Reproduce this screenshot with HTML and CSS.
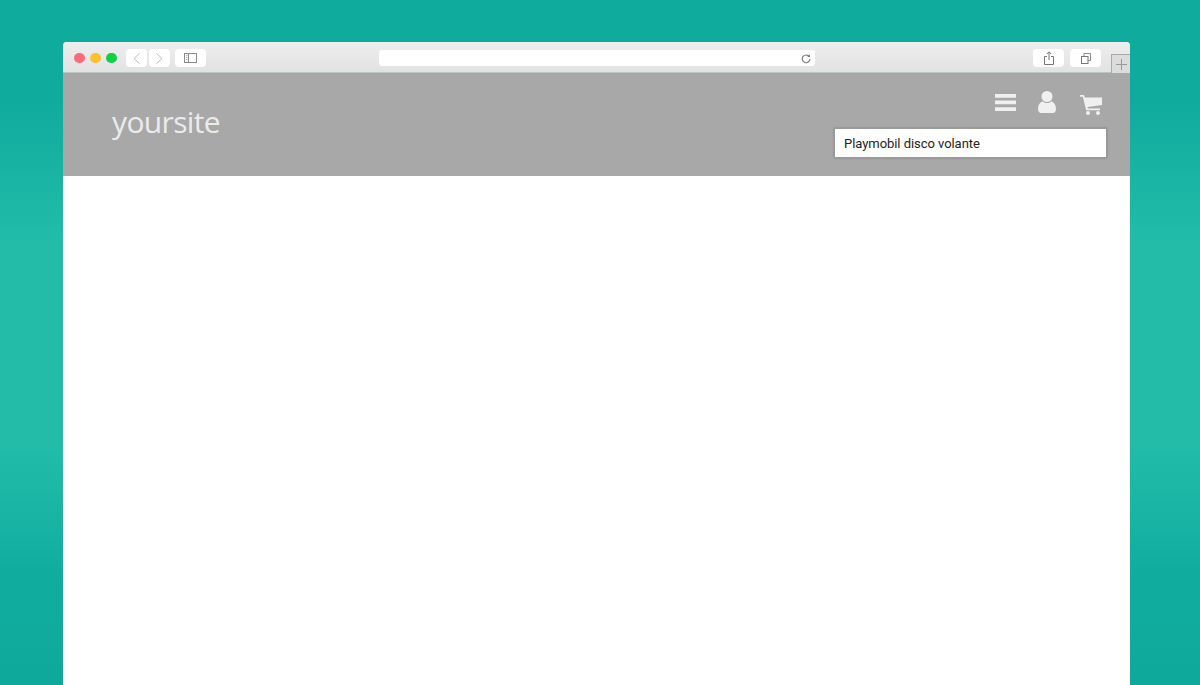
FILE: index.html
```html
<!DOCTYPE html>
<html lang="en">
<head>
<meta charset="utf-8">
<title>yoursite</title>
<link rel="stylesheet" href="styles.css">
</head>
<body>
<div class="window">
  <div class="toolbar">
    <div class="lights">
      <span class="light red"></span>
      <span class="light yellow"></span>
      <span class="light green"></span>
    </div>
    <div class="nav-group">
      <button class="tb nav"><svg width="7" height="11" viewBox="0 0 7 11"><path d="M6.500 .5 1 5.500l5.500 5" fill="none" stroke="#bdbdbd"/></svg></button>
      <button class="tb nav"><svg width="7" height="11" viewBox="0 0 7 11"><path d="M.5 .5 6 5.500l-5.500 5" fill="none" stroke="#bdbdbd"/></svg></button>
    </div>
    <button class="tb side"><svg width="13" height="10" viewBox="0 0 13 10"><rect x=".5" y=".5" width="12" height="9" fill="none" stroke="#8a8a8a"/><path d="M2 2.500h1.500M2 4.500h1.500M2 6.500h1.500" stroke="#b5b5b5"/><path d="M4.500 .5v9" stroke="#8a8a8a"/></svg></button>
    <div class="address">
      <svg width="10" height="11" viewBox="0 0 10 11"><path d="M8.300 3.600A3.900 3.900 0 1 0 9 6" fill="none" stroke="#777" stroke-width="1.100"/><path d="M6.300 3.700 9 4.200 8.700 1.200z" fill="#777"/></svg>
    </div>
    <button class="tb action"><svg width="10" height="14" viewBox="0 0 10 14"><path d="M3 5.500H.5v8h9v-8H7M5 9V1M2.800 3 5 .8 7.200 3" fill="none" stroke="#777"/></svg></button>
    <button class="tb action tabs"><svg width="10" height="11" viewBox="0 0 10 11"><path d="M3 3V.5h6.500v7H7" fill="none" stroke="#8a8a8a"/><rect x=".5" y="3.500" width="6.500" height="7" fill="#fff" stroke="#777"/></svg></button>
    <div class="newtab"><svg width="11" height="11" viewBox="0 0 11 11"><path d="M5.500 0v11M0 5.500h11" stroke="#9a9a9a"/></svg></div>
  </div>
  <header class="site-header">
    <div class="logo">yoursite</div>
    <div class="tools">
      <div class="icons">
        <svg class="icon-menu" width="21" height="18" viewBox="0 0 21 18"><path d="M0 0h21v3.700H0zM0 6.500h21v3.700H0zM0 13.300h21V17H0z" fill="#f0f0f0"/></svg>
        <svg class="icon-user" width="18" height="22" viewBox="0 0 18 22"><circle cx="9" cy="5.500" r="5.500" fill="#f0f0f0"/><path d="M0 18C0 13 3 10.500 5 10.500 6 11.500 7.500 12 9 12s3-.5 4-1.500c2 0 5 2.500 5 7.500 0 2.500-1.500 4-3 4H3c-1.500 0-3-1.500-3-4z" fill="#f0f0f0"/></svg>
        <svg class="icon-cart" width="22" height="20" viewBox="0 0 22 20"><path d="M0 0h4l.8 2.500H22v7.500L7.500 12l.4 1.500H20v1.800H6.200L2.800 1.800H0z" fill="#f0f0f0"/><circle cx="8" cy="18" r="2" fill="#f0f0f0"/><circle cx="18" cy="18" r="2" fill="#f0f0f0"/></svg>
      </div>
      <div class="search">Playmobil disco volante</div>
    </div>
  </header>
  <main class="content"></main>
</div>
</body>
</html>
```
FILE: styles.css
```css
* { box-sizing: border-box; }
html, body { height: 100%; }
body {
  margin: 0;
  overflow: hidden;
  padding: 42px 70px 0 63px;
  background: linear-gradient(180deg, #0fab9d 0%, #0fab9d 15%, #22bca9 35%, #22bca9 65%, #10ad9f 84%, #0fa99b 100%);
}
.window {
  height: 100%;
  display: flex;
  flex-direction: column;
  border-radius: 4px 4px 0 0;
  overflow: hidden;
  background: #fff;
}
.toolbar {
  height: 31px;
  flex: none;
  display: flex;
  align-items: flex-start;
  padding: 7px 0 0 11px;
  background: linear-gradient(180deg, #eeeeee 0%, #e2e2e2 100%);
  border-bottom: 1px solid #b9c6c4;
}
.lights { display: flex; gap: 5.5px; margin-top: 3.5px; }
.light { width: 10.5px; height: 10.5px; border-radius: 50%; }
.red { background: #fe6a78; }
.yellow { background: #fdc12d; }
.green { background: #0ed145; }
.tb {
  height: 18px;
  border: 0;
  padding: 0;
  border-radius: 4px;
  background: #fff;
  display: flex;
  align-items: center;
  justify-content: center;
}
.nav-group { display: flex; gap: 2px; margin-left: 9.5px; }
.nav { width: 21px; }
.side { width: 31px; margin-left: 5px; }
.address {
  width: 436px;
  height: 16px;
  margin: 1px 0 0 173px;
  padding-right: 4px;
  border-radius: 3px;
  background: #fff;
  display: flex;
  align-items: center;
  justify-content: flex-end;
}
.action { width: 31px; margin-left: 6px; }
.address + .action { margin-left: 218px; }
.newtab {
  width: 19px;
  height: 19px;
  margin: 5px 0 0 10px;
  background: #dcdcdc;
  border: 1px solid #a9a9a9;
  border-width: 1px 0 0 1px;
  display: flex;
  align-items: center;
  justify-content: center;
}
.site-header {
  height: 103px;
  flex: none;
  display: flex;
  justify-content: space-between;
  background: #a8a8a8;
  padding: 0 23px 0 49px;
}
.logo {
  margin-top: 27px;
  font: 400 30px/44px "Open Sans", sans-serif;
  letter-spacing: -0.65px;
  color: #ebebeb;
}
.tools {
  width: 273px;
  display: flex;
  flex-direction: column;
  align-items: flex-end;
}
.icons {
  display: flex;
  align-items: flex-start;
  height: 22px;
  margin: 18px 5px 0 0;
}
.icon-menu { margin-top: 3px; }
.icon-user { margin-left: 22px; }
.icon-cart { margin: 4px 0 0 24px; }
.search {
  width: 273px;
  height: 30px;
  margin-top: 15px;
  padding-left: 9px;
  background: #fff;
  border: 1px solid #9a9a9a;
  box-shadow: 0 0 2px rgba(0, 0, 0, .25);
  font: 400 13px/30px Roboto, sans-serif;
  letter-spacing: -0.05px;
  color: #222;
}
.content { flex: 1; background: #fff; }
```
